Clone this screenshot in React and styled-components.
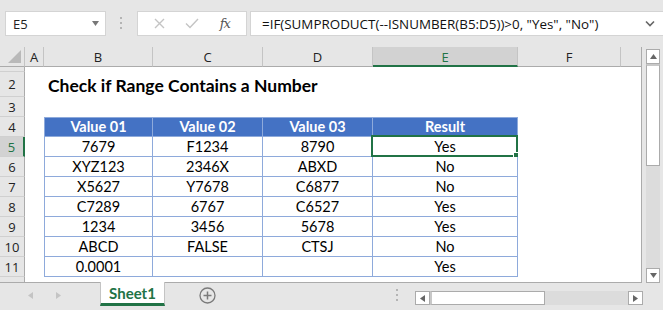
import React from "react";
import styled, { createGlobalStyle } from "styled-components";

const GREEN = "#217346";
const TBORDER = "#8eaadb";

const GlobalStyle = createGlobalStyle`
  html, body { margin: 0; padding: 0; }
  body {
    width: 663px;
    height: 310px;
    overflow: hidden;
    background: #e6e6e6;
    font-family: "Lato", "Open Sans", sans-serif;
  }
`;

const Page = styled.div`
  width: 663px;
  height: 310px;
  display: flex;
  flex-direction: column;
  background: #e6e6e6;
`;

/* ---------- formula bar ---------- */
const FormulaBar = styled.div`
  height: 47px;
  box-sizing: border-box;
  padding: 11px 0 0 5px;
  display: flex;
  align-items: flex-start;
`;

const NameBox = styled.div`
  width: 101px;
  height: 25px;
  box-sizing: border-box;
  background: #fff;
  border: 1px solid #d4d4d4;
  display: flex;
  align-items: center;
  justify-content: space-between;
  padding: 0 6px 0 7px;
  font-family: "Open Sans", sans-serif;
  font-size: 13px;
  color: #222;
`;

const Dots = styled.div`
  width: 31px;
  height: 25px;
  display: flex;
  align-items: center;
  justify-content: center;
`;

const FxButtons = styled.div`
  width: 110px;
  height: 25px;
  box-sizing: border-box;
  background: #fff;
  border: 1px solid #d4d4d4;
  display: flex;
  align-items: center;
  justify-content: space-around;
  padding: 0 6px;
`;

const FxLabel = styled.span`
  font-family: "DejaVu Serif", "Liberation Serif", serif;
  font-style: italic;
  font-size: 13px;
  color: #555;
  letter-spacing: -1px;
`;

const FormulaInput = styled.div`
  flex: 1;
  margin-left: 3px;
  height: 25px;
  box-sizing: border-box;
  background: #fff;
  border: 1px solid #d4d4d4;
  border-right: none;
  display: flex;
  align-items: center;
  justify-content: space-between;
  padding: 0 8px 0 11px;
  font-family: "Open Sans", sans-serif;
  font-size: 13.4px;
  color: #111;
  white-space: nowrap;
`;

/* ---------- sheet ---------- */
const Body = styled.div`
  display: flex;
  height: 236px;
`;

const Sheet = styled.div`
  width: 642px;
  height: 236px;
  box-sizing: border-box;
  background: #fff;
  border-right: 1px solid #ababab;
  border-bottom: 1px solid #ababab;
  overflow: hidden;
  display: grid;
  grid-template-columns: 25px 19px 109px 110px 110px 145px 103px 21px;
  grid-template-rows: 20px 5px 25px repeat(10, 20px);
`;

const Corner = styled.div`
  background: #e6e6e6;
  border-right: 1px solid #c4c4c4;
  border-bottom: 1px solid #ababab;
  box-sizing: border-box;
  display: flex;
  align-items: flex-end;
  justify-content: flex-end;
  padding: 0 3px 3px 0;
`;

const ColHead = styled.div`
  box-sizing: border-box;
  background: ${(p) => (p.$active ? "#d2d2d2" : "#e6e6e6")};
  border-right: 1px solid #c4c4c4;
  border-bottom: ${(p) => (p.$active ? `2px solid ${GREEN}` : "1px solid #ababab")};
  display: flex;
  align-items: center;
  justify-content: center;
  font-family: "Open Sans", sans-serif;
  font-size: 13px;
  color: ${(p) => (p.$active ? GREEN : "#222")};
  padding-top: ${(p) => (p.$active ? "1px" : "0")};
`;

const RowHead = styled.div`
  box-sizing: border-box;
  background: ${(p) => (p.$active ? "#d2d2d2" : "#e6e6e6")};
  border-bottom: 1px solid #d0d0d0;
  border-right: ${(p) => (p.$active ? `2px solid ${GREEN}` : "1px solid #ababab")};
  display: flex;
  align-items: ${(p) => (p.$clip ? "flex-start" : "center")};
  justify-content: center;
  padding-top: ${(p) => (p.$clip ? "1px" : "0")};
  font-family: "Open Sans", sans-serif;
  font-size: 13px;
  color: ${(p) => (p.$active ? GREEN : "#222")};
  overflow: hidden;
`;

const Cell = styled.div`
  position: relative;
  box-sizing: border-box;
  display: flex;
  align-items: flex-end;
  justify-content: center;
  padding-bottom: 1px;
  font-size: 14.5px;
  white-space: nowrap;
  background: ${(p) => (p.$head ? "#4472c4" : "#fff")};
  color: ${(p) => (p.$head ? "#fff" : "#000")};
  font-weight: ${(p) => (p.$head ? 700 : 400)};
  border-top: ${(p) => (p.$top ? `1px solid ${TBORDER}` : "none")};
  border-left: ${(p) => (p.$left ? `1px solid ${TBORDER}` : "none")};
  border-right: ${(p) => (p.$table ? `1px solid ${TBORDER}` : "none")};
  border-bottom: ${(p) => (p.$table ? `1px solid ${TBORDER}` : "none")};
`;

const Title = styled.div`
  grid-column: 3 / span 5;
  display: flex;
  align-items: flex-end;
  padding: 0 0 1px 4px;
  font-size: 17.5px;
  font-weight: 700;
  color: #000;
  white-space: nowrap;
`;

const Selection = styled.div`
  position: absolute;
  left: -2px;
  top: -2px;
  right: -1px;
  bottom: -1px;
  border: 2px solid ${GREEN};
  pointer-events: none;

  &::after {
    content: "";
    position: absolute;
    right: -4px;
    bottom: -4px;
    width: 5px;
    height: 5px;
    background: ${GREEN};
    border: 1px solid #fff;
  }
`;

/* ---------- scrollbars ---------- */
const VScroll = styled.div`
  width: 21px;
  padding: 2px 0 0 4px;
  box-sizing: border-box;
  display: flex;
  flex-direction: column;
`;

const ScrollTrack = styled.div`
  width: 14px;
  flex: 1;
  background: #dcdcdc;
  display: flex;
  flex-direction: column;
  justify-content: space-between;
`;

const ArrowBtn = styled.div`
  box-sizing: border-box;
  width: ${(p) => (p.$h ? "15px" : "14px")};
  height: ${(p) => (p.$h ? "14px" : "15px")};
  background: #fff;
  border: 1px solid #ababab;
  display: flex;
  align-items: center;
  justify-content: center;
  flex-shrink: 0;
`;

const VThumb = styled.div`
  box-sizing: border-box;
  width: 14px;
  height: 102px;
  background: #fff;
  border: 1px solid #ababab;
  border-top: 2px solid #c8c8c8;
`;

const Spacer = styled.div`
  flex: 1;
`;

const TabBar = styled.div`
  height: 27px;
  display: flex;
  align-items: flex-start;
`;

const TabNav = styled.div`
  width: 100px;
  height: 25px;
  display: flex;
  align-items: center;
  padding-left: 27px;
  gap: 21px;
  box-sizing: border-box;
`;

const Tab = styled.div`
  width: 65px;
  height: 24px;
  box-sizing: border-box;
  background: #fff;
  border-left: 1px solid #c4c4c4;
  border-right: 1px solid #c4c4c4;
  border-bottom: 3px solid ${GREEN};
  margin-top: -1px;
  display: flex;
  align-items: center;
  justify-content: center;
  font-size: 15px;
  font-weight: 700;
  color: ${GREEN};
`;

const AddSheet = styled.div`
  width: 84px;
  height: 25px;
  display: flex;
  align-items: center;
  justify-content: center;
`;

const TabGap = styled.div`
  width: 166px;
  height: 25px;
  display: flex;
  align-items: center;
  justify-content: flex-end;
  padding-right: 16px;
  box-sizing: border-box;
`;

const HScroll = styled.div`
  width: 228px;
  height: 14px;
  margin-top: 8px;
  background: #dcdcdc;
  display: flex;
`;

const HThumb = styled.div`
  box-sizing: border-box;
  width: 115px;
  height: 14px;
  background: #fff;
  border: 1px solid #ababab;
  border-left: 2px solid #c8c8c8;
`;

/* ---------- small drawings ---------- */
const Tri = ({ dir, color = "#777", size = 7 }) => {
  const pts = {
    up: "0,6 7,6 3.5,1",
    down: "0,1 7,1 3.5,6",
    left: "6,0 6,7 1,3.5",
    right: "1,0 1,7 6,3.5",
  }[dir];
  return (
    <svg width={size} height={size} viewBox="0 0 7 7">
      <polygon points={pts} fill={color} />
    </svg>
  );
};

const VDots = () => (
  <svg width="3" height="13" viewBox="0 0 3 13">
    <rect x="0" y="0" width="2" height="2" fill="#b4b4b4" />
    <rect x="0" y="5" width="2" height="2" fill="#b4b4b4" />
    <rect x="0" y="10" width="2" height="2" fill="#b4b4b4" />
  </svg>
);

const Cross = () => (
  <svg width="11" height="11" viewBox="0 0 11 11">
    <path d="M1 1 L10 10 M10 1 L1 10" stroke="#c4c4c4" strokeWidth="1.4" />
  </svg>
);

const Check = () => (
  <svg width="14" height="11" viewBox="0 0 14 11">
    <path d="M1 5.5 L5 9.5 L13 1" stroke="#c4c4c4" strokeWidth="1.4" fill="none" />
  </svg>
);

const Chevron = () => (
  <svg width="10" height="7" viewBox="0 0 10 7">
    <path d="M1 1.5 L5 5.5 L9 1.5" stroke="#666" strokeWidth="1.6" fill="none" />
  </svg>
);

const PlusCircle = () => (
  <svg width="17" height="17" viewBox="0 0 17 17">
    <circle cx="8.5" cy="8.5" r="7.5" stroke="#7a7a7a" strokeWidth="1.3" fill="none" />
    <path d="M8.5 4.5 V12.5 M4.5 8.5 H12.5" stroke="#7a7a7a" strokeWidth="1.5" />
  </svg>
);

const CornerTri = () => (
  <svg width="13" height="13" viewBox="0 0 13 13">
    <polygon points="13,0 13,13 0,13" fill="#b9b9b9" />
  </svg>
);

const COLS = ["A", "B", "C", "D", "E", "F", ""];

const DATA = [
  ["7679", "F1234", "8790", "Yes"],
  ["XYZ123", "2346X", "ABXD", "No"],
  ["X5627", "Y7678", "C6877", "No"],
  ["C7289", "6767", "C6527", "Yes"],
  ["1234", "3456", "5678", "Yes"],
  ["ABCD", "FALSE", "CTSJ", "No"],
  ["0.0001", "", "", "Yes"],
];

const Blank = () => <Cell />;

const App = () => {
  const rows = [];

  // row 1 is squeezed short, row 2 holds the title
  rows.push(
    <RowHead key="r1" />,
    ...COLS.map((c, i) => <Blank key={`r1-${i}`} />)
  );
  rows.push(
    <RowHead key="r2">2</RowHead>,
    <Blank key="r2-a" />,
    <Title key="r2-t">Check if Range Contains a Number</Title>,
    <Blank key="r2-g" />
  );
  rows.push(
    <RowHead key="r3">3</RowHead>,
    ...COLS.map((c, i) => <Blank key={`r3-${i}`} />)
  );
  rows.push(
    <RowHead key="r4">4</RowHead>,
    <Blank key="r4-a" />,
    ...["Value 01", "Value 02", "Value 03", "Result"].map((h, i) => (
      <Cell key={`r4-${i}`} $head $table $top $left={i === 0}>
        {h}
      </Cell>
    )),
    <Blank key="r4-f" />,
    <Blank key="r4-g" />
  );
  DATA.forEach((r, ri) => {
    const n = ri + 5;
    rows.push(
      <RowHead key={`r${n}`} $active={n === 5}>
        {n}
      </RowHead>,
      <Blank key={`r${n}-a`} />,
      ...r.map((v, i) => (
        <Cell key={`r${n}-${i}`} $table $left={i === 0}>
          {v}
          {n === 5 && i === 3 && <Selection />}
        </Cell>
      )),
      <Blank key={`r${n}-f`} />,
      <Blank key={`r${n}-g`} />
    );
  });
  rows.push(
    <RowHead key="r12" $clip>12</RowHead>,
    ...COLS.map((c, i) => <Blank key={`r12-${i}`} />)
  );

  return (
    <Page>
      <GlobalStyle />
      <FormulaBar>
        <NameBox>
          <span>E5</span>
          <Tri dir="down" color="#777" />
        </NameBox>
        <Dots>
          <VDots />
        </Dots>
        <FxButtons>
          <Cross />
          <Check />
          <FxLabel>fx</FxLabel>
        </FxButtons>
        <FormulaInput>
          <span>=IF(SUMPRODUCT(--ISNUMBER(B5:D5))&gt;0, "Yes", "No")</span>
          <Chevron />
        </FormulaInput>
      </FormulaBar>

      <Body>
        <Sheet>
          <Corner>
            <CornerTri />
          </Corner>
          {COLS.map((c) => (
            <ColHead key={c || "g"} $active={c === "E"}>
              {c}
            </ColHead>
          ))}
          {rows}
        </Sheet>
        <VScroll>
          <ScrollTrack>
            <div>
              <ArrowBtn>
                <Tri dir="up" color="#666" />
              </ArrowBtn>
              <VThumb />
            </div>
            <ArrowBtn>
              <Tri dir="down" color="#666" />
            </ArrowBtn>
          </ScrollTrack>
        </VScroll>
      </Body>

      <TabBar>
        <TabNav>
          <Tri dir="left" color="#c4c4c4" />
          <Tri dir="right" color="#c4c4c4" />
        </TabNav>
        <Tab>Sheet1</Tab>
        <AddSheet>
          <PlusCircle />
        </AddSheet>
        <TabGap>
          <VDots />
        </TabGap>
        <HScroll>
          <ArrowBtn $h>
            <Tri dir="left" color="#666" />
          </ArrowBtn>
          <HThumb />
          <Spacer />
          <ArrowBtn $h>
            <Tri dir="right" color="#666" />
          </ArrowBtn>
        </HScroll>
      </TabBar>
    </Page>
  );
};

export default App;
